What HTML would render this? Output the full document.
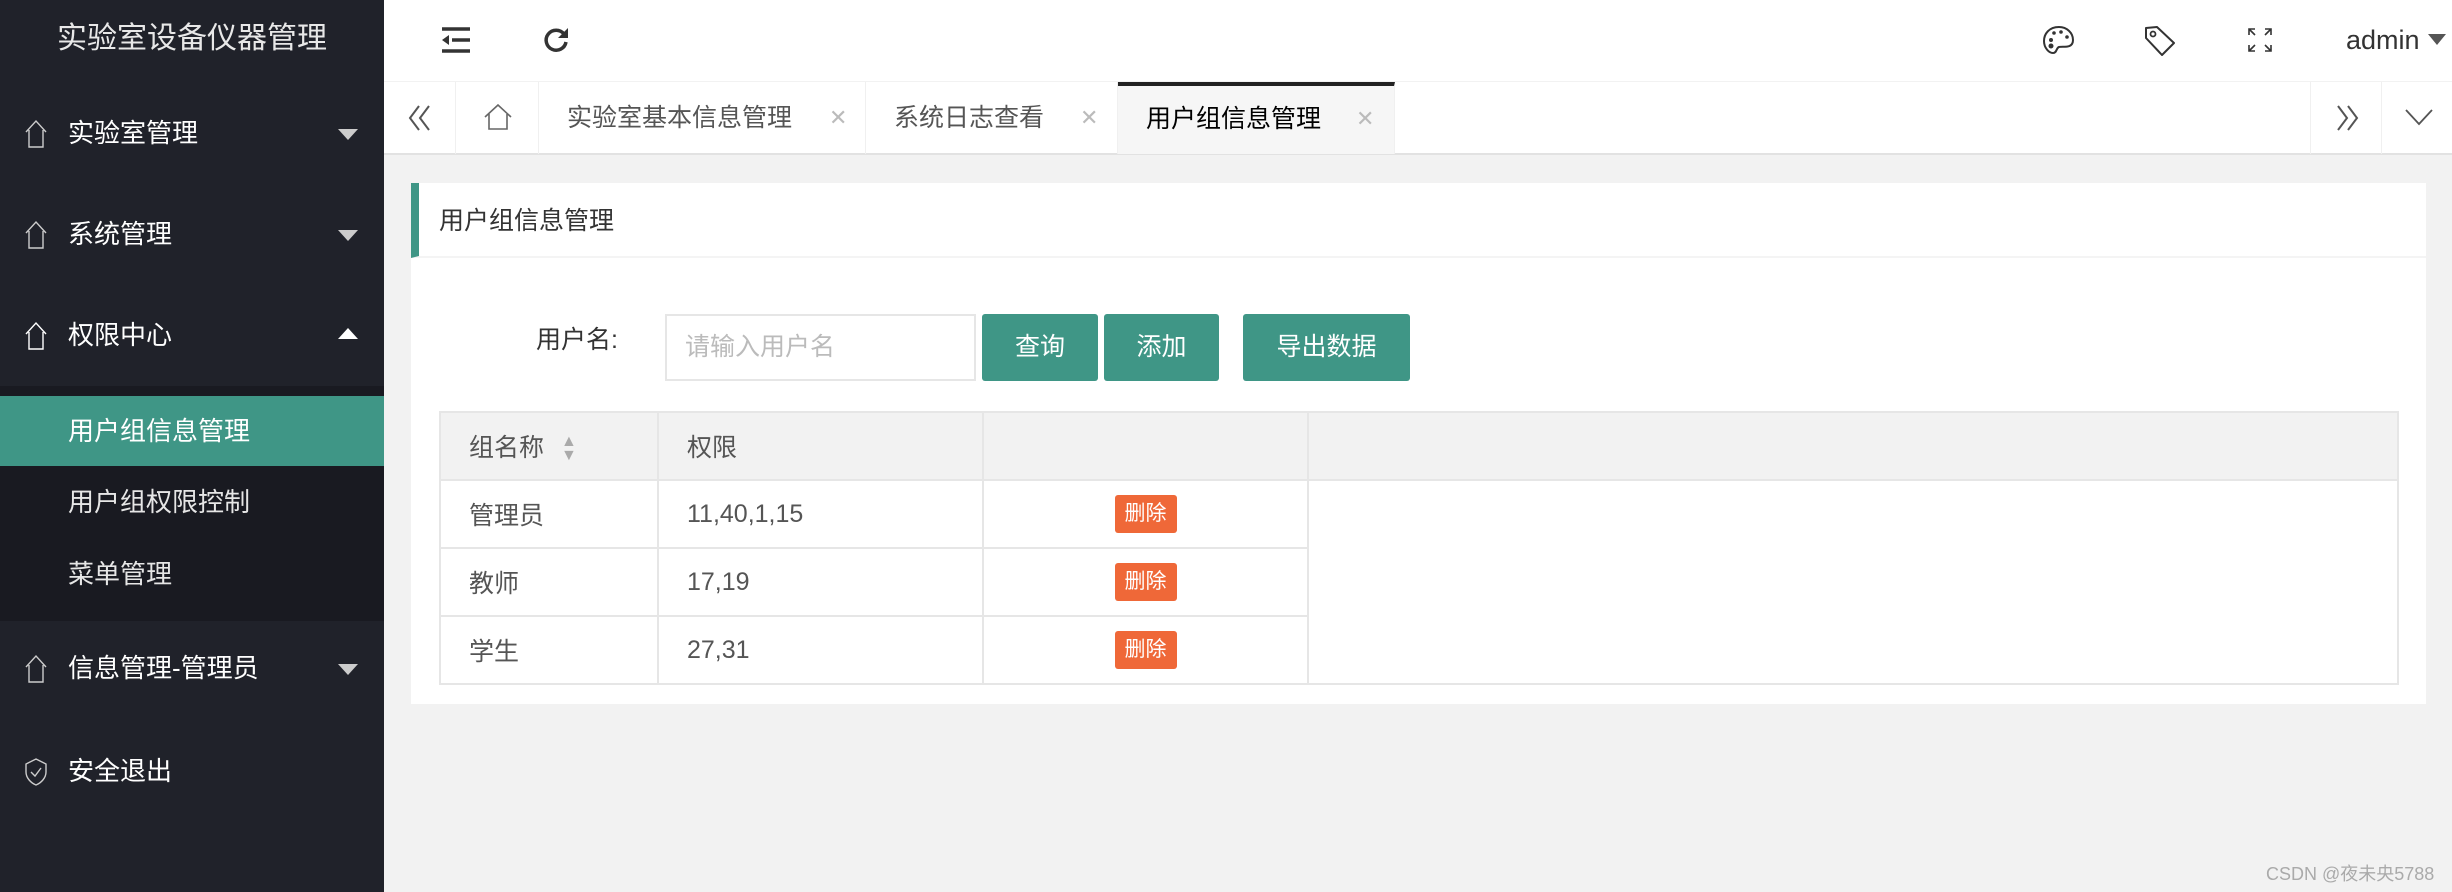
<!DOCTYPE html>
<html><head><meta charset="utf-8">
<style>
*{margin:0;padding:0;box-sizing:border-box}
body{width:2452px;height:892px;overflow:hidden;background:#f2f2f2;font-family:"Liberation Sans","Noto Sans CJK SC",sans-serif;position:relative}
.abs{position:absolute}
#side{left:0;top:0;width:384px;height:892px;background:#20222a}
.mi{position:absolute;left:0;width:384px;color:#fff;font-size:26px;line-height:40px}
.mi .t{position:absolute;left:68px}
.mi svg{position:absolute;left:24px;top:6px}
.tri{position:absolute;right:26px;top:16px;width:0;height:0;border-left:10px solid transparent;border-right:10px solid transparent}
.down{border-top:11px solid #ccc}
.up{border-bottom:11px solid #fff;top:13px}
.sub{position:absolute;left:68px;color:#fff;font-size:26px;line-height:40px}
#hdr{left:384px;top:0;width:2068px;height:81px;background:#fff}
#tabs{left:384px;top:82px;width:2068px;height:73px;background:#fff;border-bottom:2px solid #e2e2e2}
.tab{position:absolute;top:0;height:72px;border-right:1px solid #f0f0f0;font-size:25px;color:#555;line-height:72px}
.x{position:absolute;color:#bbb;font-size:22px}
#card{left:411px;top:183px;width:2015px;height:521px;background:#fff}
.btn{position:absolute;top:314px;height:67px;background:#3f9686;color:#fff;font-size:25px;line-height:67px;text-align:center;border-radius:3px}
table{position:absolute;left:439px;top:411px;border-collapse:collapse;font-size:25px;color:#555}
td{border:2px solid #e6e6e6;height:68px;padding-left:28px}
.del{display:inline-block;background:#ef6838;color:#fff;font-size:21px;padding:0 10px;height:38px;line-height:38px;border-radius:3px}
</style></head><body>
<div id="side" class="abs">
 <div class="abs" style="left:0;top:18px;width:384px;text-align:center;color:#e8e8e8;font-size:30px;line-height:42px">实验室设备仪器管理</div>
 <div class="abs" style="left:0;top:386px;width:384px;height:235px;background:#191a21"></div>
 <div class="abs" style="left:0;top:396px;width:384px;height:70px;background:#3f9686"></div>
 <div class="mi" style="top:113px"><svg width="24" height="30" viewBox="0 0 24 30"><path d="M2 13 L12 2 L22 13 M5 11 V28 H19 V11" fill="none" stroke="#ccc" stroke-width="1.4"/></svg><span class="t">实验室管理</span><i class="tri down"></i></div>
 <div class="mi" style="top:214px"><svg width="24" height="30" viewBox="0 0 24 30"><path d="M2 13 L12 2 L22 13 M5 11 V28 H19 V11" fill="none" stroke="#ccc" stroke-width="1.4"/></svg><span class="t">系统管理</span><i class="tri down"></i></div>
 <div class="mi" style="top:315px"><svg width="24" height="30" viewBox="0 0 24 30"><path d="M2 13 L12 2 L22 13 M5 11 V28 H19 V11" fill="none" stroke="#fff" stroke-width="1.4"/></svg><span class="t">权限中心</span><i class="tri up"></i></div>
 <div class="sub" style="top:411px">用户组信息管理</div>
 <div class="sub" style="top:482px;color:#e6e6e6">用户组权限控制</div>
 <div class="sub" style="top:554px;color:#e6e6e6">菜单管理</div>
 <div class="mi" style="top:648px"><svg width="24" height="30" viewBox="0 0 24 30"><path d="M2 13 L12 2 L22 13 M5 11 V28 H19 V11" fill="none" stroke="#ccc" stroke-width="1.4"/></svg><span class="t">信息管理-管理员</span><i class="tri down"></i></div>
 <div class="mi" style="top:751px"><svg width="24" height="30" viewBox="0 0 24 30"><path d="M12 2 L22 7 V15 C22 21 17 26 12 28 C7 26 2 21 2 15 V7 Z M7 15 L11 19 L17 11" fill="none" stroke="#ccc" stroke-width="1.4"/></svg><span class="t">安全退出</span></div>
</div>

<div id="hdr" class="abs">
 <svg class="abs" style="left:58px;top:27px" width="28" height="26" viewBox="0 0 28 26"><path d="M0 2 H28 M10 13 H28 M0 24 H28" stroke="#333" stroke-width="3.5"/><path d="M0 13 L7 8 V18 Z" fill="#333"/></svg>
 <svg class="abs" style="left:158px;top:26px" width="28" height="28" viewBox="0 0 28 28"><path d="M22 8 A10 10 0 1 0 24 16" fill="none" stroke="#333" stroke-width="3.5"/><path d="M26 2 V12 H16 Z" fill="#333"/></svg>
 <svg class="abs" style="left:1659px;top:25px" width="32" height="30" viewBox="0 0 32 30"><path d="M16 2 C6 2 1 9 1 16 C1 23 6 28 10 28 C14 28 13 23 16 22 C20 21 30 24 30 15 C30 8 24 2 16 2 Z" fill="none" stroke="#333" stroke-width="2"/><circle cx="8" cy="15" r="2" fill="#333"/><circle cx="11" cy="8" r="1.8" fill="#333"/><circle cx="18" cy="7" r="1.8" fill="#333"/><circle cx="24" cy="12" r="1.8" fill="#333"/><circle cx="8" cy="21" r="2.5" fill="#333"/></svg>
 <svg class="abs" style="left:1760px;top:25px" width="32" height="32" viewBox="0 0 32 32"><path d="M2 3 L13 2 L30 18 L18 30 L2 13 Z" fill="none" stroke="#333" stroke-width="2" stroke-linejoin="round"/><circle cx="9" cy="9" r="2.5" fill="none" stroke="#333" stroke-width="1.8"/></svg>
 <svg class="abs" style="left:1864px;top:28px" width="24" height="24" viewBox="0 0 24 24"><path d="M1 7 V1 H7 M1 1 L7 7 M17 1 H23 V7 M23 1 L17 7 M1 17 V23 H7 M1 23 L7 17 M23 17 V23 H17 M23 23 L17 17" fill="none" stroke="#333" stroke-width="1.6"/></svg>
 <div class="abs" style="left:1962px;top:20px;font-size:27px;color:#333;line-height:40px">admin</div>
 <div class="abs" style="left:2044px;top:34px;border-left:9px solid transparent;border-right:9px solid transparent;border-top:11px solid #555"></div>
</div>

<div id="tabs" class="abs">
 <div class="tab" style="left:0;width:72px"><svg style="position:absolute;left:23px;top:23px" width="26" height="26" viewBox="0 0 26 26"><path d="M12 1 L3 13 L12 25 M22 1 L13 13 L22 25" fill="none" stroke="#555" stroke-width="2"/></svg></div>
 <div class="tab" style="left:72px;width:83px"><svg style="position:absolute;left:27px;top:22px" width="30" height="26" viewBox="0 0 30 26"><path d="M2 13 L15 1 L28 13 M6 10 V25 H24 V10" fill="none" stroke="#666" stroke-width="1.6"/></svg></div>
 <div class="tab" style="left:155px;width:327px"><span style="position:absolute;left:28px">实验室基本信息管理</span><span class="x" style="left:290px">✕</span></div>
 <div class="tab" style="left:482px;width:252px"><span style="position:absolute;left:28px">系统日志查看</span><span class="x" style="left:214px">✕</span></div>
 <div class="tab" style="left:734px;width:277px;background:#f6f6f6;color:#000;border-top:4px solid #222;line-height:66px"><span style="position:absolute;left:28px">用户组信息管理</span><span class="x" style="left:238px">✕</span></div>
 <div class="tab" style="left:1926px;width:72px;border-left:1px solid #f0f0f0"><svg style="position:absolute;left:23px;top:23px" width="26" height="26" viewBox="0 0 26 26"><path d="M4 1 L13 13 L4 25 M14 1 L23 13 L14 25" fill="none" stroke="#555" stroke-width="2"/></svg></div>
 <svg class="abs" style="left:2020px;top:26px" width="30" height="18" viewBox="0 0 30 18"><path d="M2 2 L15 16 L28 2" fill="none" stroke="#555" stroke-width="1.8"/></svg>
</div>

<div id="card" class="abs">
 <div class="abs" style="left:0;top:0;width:2015px;height:75px;border-bottom:2px solid #f4f4f4;border-left:8px solid #3f9686"></div>
 <div class="abs" style="left:28px;top:18px;font-size:25px;color:#333;line-height:40px">用户组信息管理</div>
</div>
<div class="abs" style="left:536px;top:320px;font-size:25px;color:#333;line-height:40px">用户名:</div>
<div class="abs" style="left:665px;top:314px;width:311px;height:67px;border:2px solid #e6e6e6;background:#fff;color:#bbb;font-size:25px;line-height:63px;padding-left:18px">请输入用户名</div>
<div class="btn" style="left:982px;width:116px">查询</div>
<div class="btn" style="left:1104px;width:115px">添加</div>
<div class="btn" style="left:1243px;width:167px">导出数据</div>

<table>
 <tr style="background:#f2f2f2"><td style="width:218px">组名称 <span style="display:inline-block;vertical-align:middle;margin-left:10px;font-size:16px;line-height:14px;color:#aaa">▲<br>▼</span></td><td style="width:325px">权限</td><td style="width:325px"></td><td style="width:1090px"></td></tr>
 <tr><td>管理员</td><td>11,40,1,15</td><td style="text-align:center;padding:0"><span class="del">删除</span></td><td rowspan="3" style="background:#fff"></td></tr>
 <tr><td>教师</td><td>17,19</td><td style="text-align:center;padding:0"><span class="del">删除</span></td></tr>
 <tr><td>学生</td><td>27,31</td><td style="text-align:center;padding:0"><span class="del">删除</span></td></tr>
</table>

<div class="abs" style="left:2266px;top:860px;font-size:18px;color:#aaa">CSDN @夜未央5788</div>
</body></html>
